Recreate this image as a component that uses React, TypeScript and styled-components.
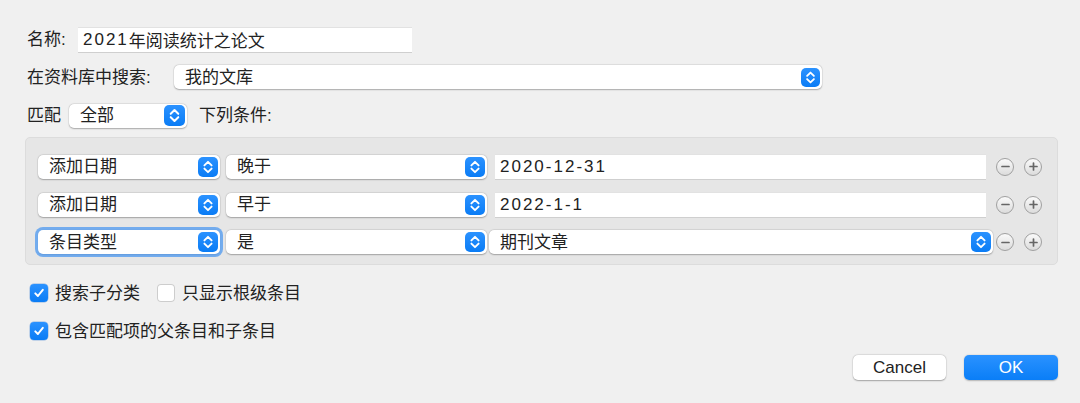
import React from 'react';
import styled, { createGlobalStyle, css } from 'styled-components';

const GlobalStyle = createGlobalStyle`
    html, body {
        margin: 0;
        padding: 0;
        background: #f0f0f0;
    }
    * {
        box-sizing: border-box;
    }
`;

const FONT = `"Liberation Sans", "Noto Sans CJK SC", sans-serif`;

type condition = {
    field: string;
    op: string;
    value: string;
    valueIsPopup?: boolean;
    focused?: boolean;
}

const conditions: condition[] = [
    {field: '添加日期', op: '晚于', value: '2020-12-31'},
    {field: '添加日期', op: '早于', value: '2022-1-1'},
    {field: '条目类型', op: '是', value: '期刊文章', valueIsPopup: true, focused: true},
];

const Stepper = ({size = 20}: {size?: number}) => (
    <StepperBox size={size}>
        <svg width={size} height={size} viewBox="0 0 20 20">
            <path d="M6.4 8.4 L10 4.8 L13.6 8.4" fill="none" stroke="#fff" strokeWidth="1.9" strokeLinecap="round" strokeLinejoin="round" />
            <path d="M6.4 11.6 L10 15.2 L13.6 11.6" fill="none" stroke="#fff" strokeWidth="1.9" strokeLinecap="round" strokeLinejoin="round" />
        </svg>
    </StepperBox>
);

const Popup = ({label, width, stepper = 20, focused = false, margin = '0'}: {label: string; width: number; stepper?: number; focused?: boolean; margin?: string}) => (
    <PopupBox width={width} focused={focused} margin={margin}>
        <PopupText>{label}</PopupText>
        <Stepper size={stepper} />
    </PopupBox>
);

const RoundButton = ({kind}: {kind: 'minus' | 'plus'}) => (
    <Circle>
        <svg width="9" height="9" viewBox="0 0 9 9">
            <path d="M1 4.5 H8" stroke="#666" strokeWidth="1.7" strokeLinecap="round" />
            {kind === 'plus' && <path d="M4.5 1 V8" stroke="#666" strokeWidth="1.7" strokeLinecap="round" />}
        </svg>
    </Circle>
);

const Check = ({checked}: {checked: boolean}) => (
    <CheckBox checked={checked}>
        {checked && (
            <svg width="12" height="12" viewBox="0 0 12 12">
                <path d="M2.3 6.4 L4.9 9 L9.8 2.8" fill="none" stroke="#fff" strokeWidth="2" strokeLinecap="round" strokeLinejoin="round" />
            </svg>
        )}
    </CheckBox>
);

const App = () => {
    return (
        <Dialog>
            <GlobalStyle />
            <Row height={27}>
                <Label width={51}>名称:</Label>
                <TextField width={334}><Num>2021</Num>年阅读统计之论文</TextField>
            </Row>
            <Row height={24} top={12}>
                <Label width={147}>在资料库中搜索:</Label>
                <Popup label="我的文库" width={648} stepper={19} />
            </Row>
            <Row height={25} top={14}>
                <Label width={42}>匹配</Label>
                <Popup label="全部" width={118} stepper={21} />
                <Label width={120} style={{marginLeft: 12}}>下列条件:</Label>
            </Row>
            <Panel>
                {conditions.map((c, i) => (
                    <ConditionRow key={i}>
                        <Popup label={c.field} width={182} focused={c.focused} />
                        <Popup label={c.op} width={261} margin="0 0 0 6px" />
                        {c.valueIsPopup
                            ? <Popup label={c.value} width={504} margin="0 3px 0 2px" />
                            : <TextField width={491} margin="0 10px 0 8px"><Num>{c.value}</Num></TextField>}
                        <RoundButton kind="minus" />
                        <Spacer />
                        <RoundButton kind="plus" />
                    </ConditionRow>
                ))}
            </Panel>
            <CheckRow top={19}>
                <Check checked={true} />
                <CheckLabel>搜索子分类</CheckLabel>
                <Check checked={false} />
                <CheckLabel>只显示根级条目</CheckLabel>
            </CheckRow>
            <CheckRow top={20}>
                <Check checked={true} />
                <CheckLabel>包含匹配项的父条目和子条目</CheckLabel>
            </CheckRow>
            <Buttons>
                <Button>Cancel</Button>
                <Button primary>OK</Button>
            </Buttons>
        </Dialog>
    );
}


// styled-components
const Dialog = styled.div`
    width: 1080px;
    height: 403px;
    padding: 26px 22px 0 27px;
    background: #f0f0f0;
    font-family: ${FONT};
    font-size: 17px;
    color: #222;
    display: flex;
    flex-direction: column;
    overflow: hidden;
`;

const Row = styled.div<{height: number; top?: number}>`
    display: flex;
    align-items: center;
    height: ${p => p.height}px;
    margin-top: ${p => p.top || 0}px;
`;

const Label = styled.div<{width: number}>`
    width: ${p => p.width}px;
    flex-shrink: 0;
    white-space: nowrap;
    line-height: 1;
`;

const TextField = styled.div<{width: number; margin?: string}>`
    width: ${p => p.width}px;
    height: 26px;
    flex-shrink: 0;
    margin: ${p => p.margin || '0'};
    padding: 0 5px;
    display: flex;
    align-items: center;
    background: #fff;
    border-top: 1px solid #e2e2e2;
    border-bottom: 1px solid #cfcfcf;
    white-space: nowrap;
`;

const Num = styled.span`
    letter-spacing: 2px;
`;

const PopupBox = styled.div<{width: number; focused: boolean; margin: string}>`
    width: ${p => p.width}px;
    height: 24px;
    flex-shrink: 0;
    margin: ${p => p.margin};
    padding: 0 2px 0 11px;
    display: flex;
    align-items: center;
    justify-content: space-between;
    background: #fff;
    border-radius: 5px;
    box-shadow: 0 0.5px 1.5px rgba(0, 0, 0, 0.28), 0 0 0 0.5px rgba(0, 0, 0, 0.06);
    ${p => p.focused && css`
        box-shadow: 0 0 0 3px rgba(76, 152, 240, 0.75), 0 0.5px 1.5px rgba(0, 0, 0, 0.28);
    `}
`;

const PopupText = styled.span`
    white-space: nowrap;
    line-height: 1;
`;

const StepperBox = styled.div<{size: number}>`
    width: ${p => p.size}px;
    height: ${p => p.size}px;
    border-radius: 5px;
    background: linear-gradient(#2b92ff, #0a7cf5);
    display: flex;
    align-items: center;
    justify-content: center;
    flex-shrink: 0;

    svg {
        display: block;
    }
`;

const Panel = styled.div`
    margin-top: 9px;
    margin-left: -2px;
    width: 1033px;
    height: 128px;
    padding: 16px 12px 11px 12px;
    background: #e6e6e6;
    border: 1px solid #dcdcdc;
    border-radius: 5px;
    display: flex;
    flex-direction: column;
    gap: 13px;
`;

const ConditionRow = styled.div`
    display: flex;
    align-items: center;
    height: 25px;
`;

const Circle = styled.div`
    width: 18px;
    height: 18px;
    border-radius: 50%;
    border: 1px solid #a0a0a0;
    background: linear-gradient(#fafafa, #dcdcdc);
    display: flex;
    align-items: center;
    justify-content: center;
    flex-shrink: 0;

    svg {
        display: block;
    }
`;

const Spacer = styled.div`
    width: 10px;
    flex-shrink: 0;
`;

const CheckRow = styled.div<{top: number}>`
    display: flex;
    align-items: center;
    height: 18px;
    margin-top: ${p => p.top}px;
    margin-left: 3px;
`;

const CheckBox = styled.div<{checked: boolean}>`
    width: 18px;
    height: 18px;
    border-radius: 4px;
    flex-shrink: 0;
    display: flex;
    align-items: center;
    justify-content: center;
    background: ${p => p.checked ? 'linear-gradient(#2b92ff, #0a7cf5)' : '#fff'};
    box-shadow: ${p => p.checked ? '0 0 0 0.5px rgba(0, 90, 200, 0.4)' : 'inset 0 0 0 1px #cdcdcd'};
`;

const CheckLabel = styled.span`
    margin-left: 7px;
    margin-right: 17px;
    white-space: nowrap;
    line-height: 1;
`;

const Buttons = styled.div`
    display: flex;
    justify-content: flex-end;
    gap: 18px;
    margin-top: 15px;
`;

const Button = styled.button<{primary?: boolean}>`
    width: ${p => p.primary ? 94 : 93}px;
    height: 25px;
    border: none;
    border-radius: 5px;
    font-family: ${FONT};
    font-size: 17px;
    padding: 0;
    color: ${p => p.primary ? '#fff' : '#222'};
    background: ${p => p.primary ? 'linear-gradient(#2a92ff, #0a7ef7)' : '#fff'};
    box-shadow: ${p => p.primary ? '0 0.5px 1.5px rgba(0, 0, 0, 0.25)' : '0 0.5px 1.5px rgba(0, 0, 0, 0.3), 0 0 0 0.5px rgba(0, 0, 0, 0.06)'};
`;

export default App;
